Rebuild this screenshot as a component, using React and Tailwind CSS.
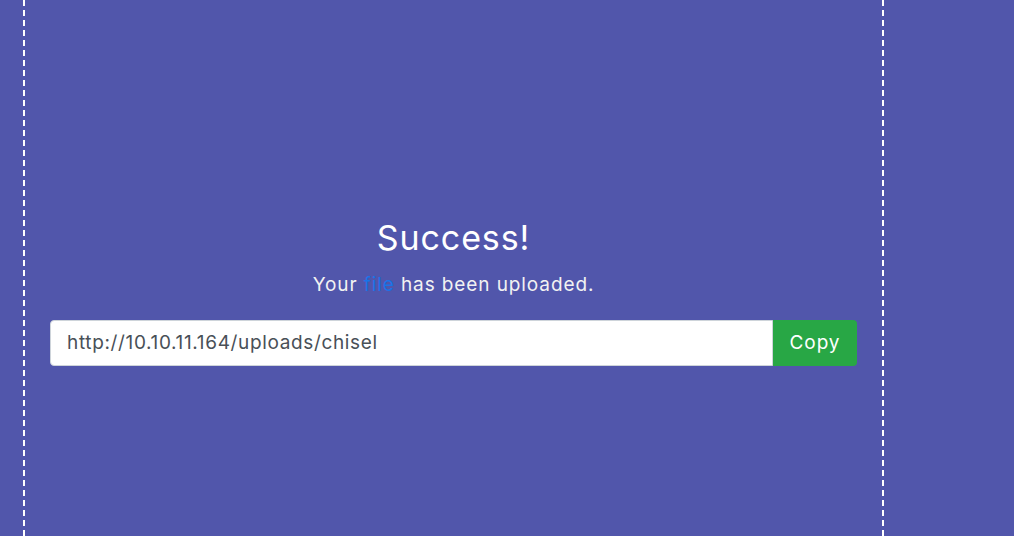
import React from 'react';

export default function App() {
    return (
        <div className="bg-[#5156ab] h-[536px] w-full overflow-hidden">
            <div className="ml-[23px] w-[861px] h-full border-x-2 border-dashed border-white flex flex-col items-center pt-[217px] px-[25px] font-['Inter',sans-serif]">
                <h2 className="text-white text-[34px] leading-[42px] tracking-[0.9px] font-normal">Success!</h2>
                <p className="text-[#f2f2f2] text-[19px] leading-[26px] tracking-[0.9px] mt-[13px]">
                    Your <span className="text-[#1a73e8]">file</span> has been uploaded.
                </p>
                <div className="flex w-full mt-[22px] h-[46px]">
                    <div className="flex-1 bg-white rounded-l-[4px] border border-[#ced4da] flex items-center px-[16px] text-[19px] tracking-[0.65px] text-[#495057]">
                        http://10.10.11.164/uploads/chisel
                    </div>
                    <button className="w-[84px] bg-[#28a745] rounded-r-[4px] text-white text-[19px] tracking-[0.9px]">Copy</button>
                </div>
            </div>
        </div>
    );
}
